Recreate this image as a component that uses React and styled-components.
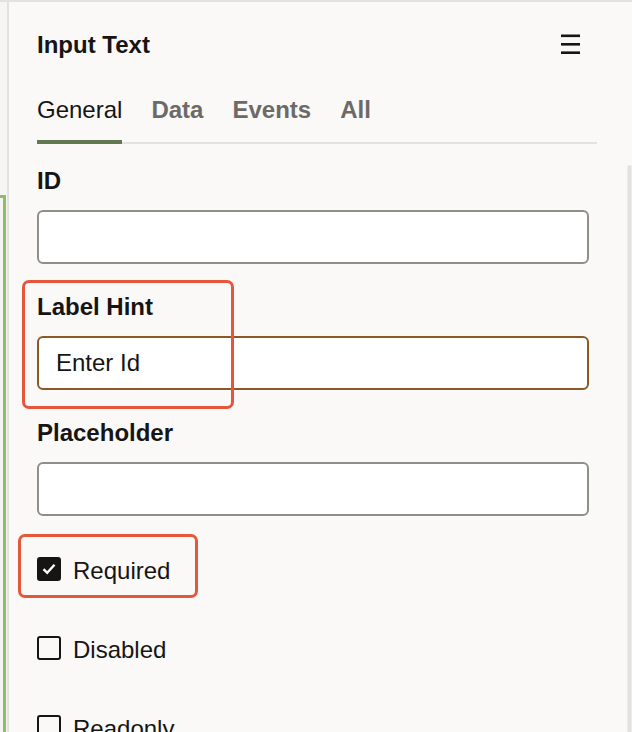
import React from "react";
import styled, { createGlobalStyle } from "styled-components";

const GlobalStyle = createGlobalStyle`
  html, body {
    margin: 0;
    padding: 0;
    background: #faf9f8;
  }
  body {
    font-family: "Liberation Sans", Arial, sans-serif;
    color: #161513;
  }
`;

const Page = styled.div`
  display: flex;
  width: 632px;
  height: 732px;
  overflow: hidden;
  border-top: 2px solid #e4e2df;
  box-sizing: border-box;
  background: #faf9f8;
`;

const LeftStrip = styled.div`
  width: 7px;
  flex-shrink: 0;
  border-right: 2px solid #e4e2df;
  background: #f6f5f3;
`;

const GreenEdge = styled.div`
  width: 3px;
  height: 100%;
  margin-top: 193px;
  border-top: 3px solid #8cbd6b;
  border-right: 3px solid #8cbd6b;
`;

const Panel = styled.div`
  flex: 1;
  display: flex;
  flex-direction: column;
  padding: 29px 0 0 28px;
`;

const Header = styled.div`
  display: flex;
  justify-content: space-between;
  align-items: flex-start;
  padding-right: 52px;
`;

const Title = styled.h2`
  margin: 0;
  font-size: 24px;
  line-height: 28px;
  font-weight: 700;
`;

const MenuButton = styled.button`
  border: 0;
  background: none;
  padding: 0;
  margin-top: 3px;
  width: 19px;
  height: 20px;
  display: flex;
  color: #161513;
`;

const Tabs = styled.div`
  display: flex;
  gap: 29px;
  margin-top: 37px;
  margin-right: 35px;
  border-bottom: 2px solid #e4e2df;
`;

const Tab = styled.div`
  font-size: 24px;
  line-height: 28px;
  padding-bottom: 16px;
  margin-bottom: -2px;
  font-weight: ${(p) => (p.$active ? 400 : 700)};
  color: ${(p) => (p.$active ? "#161513" : "#6c6a67")};
  border-bottom: 4px solid ${(p) => (p.$active ? "#5f7a52" : "transparent")};
`;

const Body = styled.div`
  display: flex;
  margin-top: 21px;
  flex: 1;
`;

const Form = styled.div`
  width: 552px;
  padding-top: 2px;
  display: flex;
  flex-direction: column;
`;

const ScrollTrack = styled.div`
  width: 3px;
  margin-left: 38px;
  border-radius: 2px 2px 0 0;
  background: #e3e1de;
  border: 1px solid #ecebe8;
  border-bottom: 0;
`;

const Field = styled.div`
  position: relative;
  display: flex;
  flex-direction: column;
  margin-bottom: 29px;
`;

const Label = styled.label`
  font-size: 24px;
  line-height: 28px;
  font-weight: 700;
  margin-bottom: 15px;
`;

const TextInput = styled.input`
  box-sizing: border-box;
  height: 54px;
  width: 100%;
  border: 2px solid ${(p) => (p.$focused ? "#8a5a26" : "#8f8e8b")};
  border-radius: 6px;
  background: #fff;
  padding: 0 17px;
  font-family: "Liberation Sans", Arial, sans-serif;
  font-size: 24px;
  line-height: 50px;
  color: #161513;
  outline: none;
`;

const Highlight = styled.div`
  position: absolute;
  box-sizing: border-box;
  border: 3px solid #e5573a;
  border-radius: 7px;
  pointer-events: none;
  top: ${(p) => p.$top}px;
  left: ${(p) => p.$left}px;
  width: ${(p) => p.$width}px;
  height: ${(p) => p.$height}px;
`;

const CheckList = styled.div`
  display: flex;
  flex-direction: column;
  gap: 55px;
  margin-top: 12px;
`;

const CheckRow = styled.div`
  position: relative;
  display: flex;
  align-items: center;
  gap: 12px;
  height: 24px;
`;

const Box = styled.span`
  box-sizing: border-box;
  width: 24px;
  height: 24px;
  border-radius: 3px;
  border: 2px solid #161513;
  background: ${(p) => (p.$checked ? "#161513" : "transparent")};
  display: flex;
  align-items: center;
  justify-content: center;
  flex-shrink: 0;
`;

const CheckText = styled.span`
  font-size: 24px;
  line-height: 24px;
  padding-top: 4px;
`;

const MenuIcon = () => (
  <svg width="19" height="20" viewBox="0 0 19 20">
    <rect x="0" y="0.5" width="19" height="2.6" fill="currentColor" />
    <rect x="0" y="9" width="19" height="2.6" fill="currentColor" />
    <rect x="0" y="17.4" width="19" height="2.6" fill="currentColor" />
  </svg>
);

const Check = ({ label, checked, children }) => (
  <CheckRow>
    <Box $checked={checked}>
      {checked && (
        <svg width="14" height="12" viewBox="0 0 14 12">
          <path d="M1.5 6.2 L5.2 9.8 L12.5 1.8" fill="none" stroke="#fff" strokeWidth="2.4" />
        </svg>
      )}
    </Box>
    <CheckText>{label}</CheckText>
    {children}
  </CheckRow>
);

const tabs = ["General", "Data", "Events", "All"];

export default function App() {
  return (
    <>
      <GlobalStyle />
      <Page>
        <LeftStrip>
          <GreenEdge />
        </LeftStrip>
        <Panel>
          <Header>
            <Title>Input Text</Title>
            <MenuButton aria-label="Menu">
              <MenuIcon />
            </MenuButton>
          </Header>
          <Tabs>
            {tabs.map((t, i) => (
              <Tab key={t} $active={i === 0}>
                {t}
              </Tab>
            ))}
          </Tabs>
          <Body>
            <Form>
              <Field>
                <Label>ID</Label>
                <TextInput defaultValue="" />
              </Field>
              <Field>
                <Label>Label Hint</Label>
                <TextInput $focused defaultValue="Enter Id" />
                <Highlight $top={-13} $left={-15} $width={212} $height={129} />
              </Field>
              <Field>
                <Label>Placeholder</Label>
                <TextInput defaultValue="" />
              </Field>
              <CheckList>
                <Check label="Required" checked>
                  <Highlight $top={-23} $left={-19} $width={180} $height={64} />
                </Check>
                <Check label="Disabled" />
                <Check label="Readonly" />
              </CheckList>
            </Form>
            <ScrollTrack />
          </Body>
        </Panel>
      </Page>
    </>
  );
}
